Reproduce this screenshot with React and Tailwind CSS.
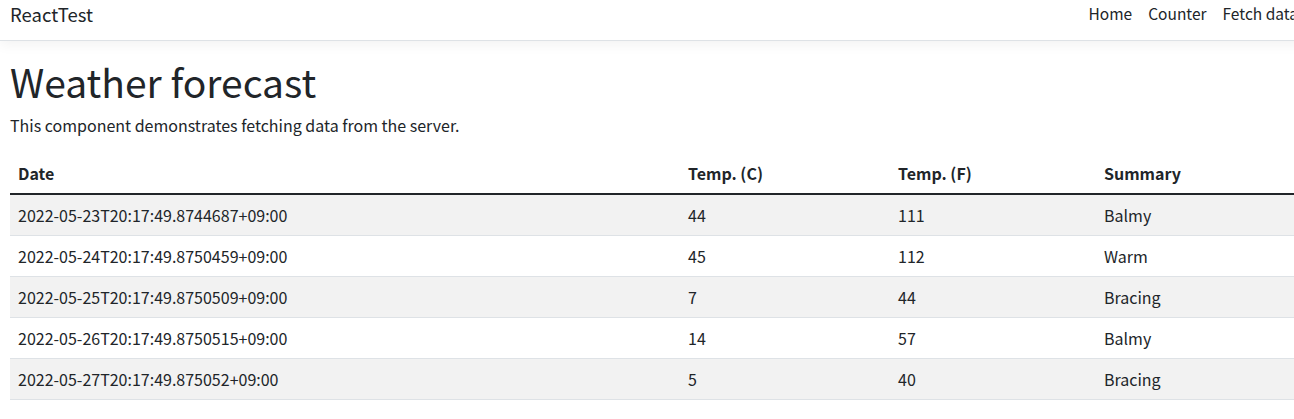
const forecasts = [
  { date: '2022-05-23T20:17:49.8744687+09:00', c: 44, f: 111, summary: 'Balmy' },
  { date: '2022-05-24T20:17:49.8750459+09:00', c: 45, f: 112, summary: 'Warm' },
  { date: '2022-05-25T20:17:49.8750509+09:00', c: 7, f: 44, summary: 'Bracing' },
  { date: '2022-05-26T20:17:49.8750515+09:00', c: 14, f: 57, summary: 'Balmy' },
  { date: '2022-05-27T20:17:49.875052+09:00', c: 5, f: 40, summary: 'Bracing' },
];

export default function App() {
  return (
    <div
      className="w-[1294px] overflow-hidden bg-white text-[#212529] text-base leading-6"
      style={{ fontFamily: '"Noto Sans CJK KR", "Noto Sans", sans-serif' }}
    >
      <div className="w-[1306px]">
        <header>
          <nav className="mb-4 flex h-[41px] items-start justify-between border-b border-[#dee2e6] bg-white pl-[10px] shadow-[0_4px_12px_rgba(0,0,0,0.05)]">
            <a className="pt-[1px] text-[18.5px] leading-[26px] text-[#212529]">ReactTest</a>
            <ul className="flex pt-[1px] text-[15.5px]">
              <li><a className="block px-2 leading-6 text-[#212529]">Home</a></li>
              <li><a className="block px-2 leading-6 text-[#212529]">Counter</a></li>
              <li><a className="block px-2 leading-6 text-[#212529]">Fetch data</a></li>
            </ul>
          </nav>
        </header>

        <main className="px-[10px]">
          <h1 className="mb-2 text-[39px] leading-[48px] font-normal">Weather forecast</h1>
          <p className="mb-4">This component demonstrates fetching data from the server.</p>

          <table className="w-full border-collapse text-left">
            <thead>
              <tr>
                <th className="w-[670px] border-b border-[#dee2e6] px-2 py-2 font-bold">Date</th>
                <th className="w-[210px] border-b border-[#dee2e6] px-2 py-2 font-bold">Temp. (C)</th>
                <th className="w-[206px] border-b border-[#dee2e6] px-2 py-2 font-bold">Temp. (F)</th>
                <th className="border-b border-[#dee2e6] px-2 py-2 font-bold">Summary</th>
              </tr>
            </thead>
            <tbody className="border-t-2 border-[#212529]">
              {forecasts.map((row, i) => (
                <tr key={row.date} className={i % 2 === 0 ? 'bg-[#f2f2f2]' : 'bg-white'}>
                  <td className="border-b border-[#dee2e6] px-2 py-2">{row.date}</td>
                  <td className="border-b border-[#dee2e6] px-2 py-2">{row.c}</td>
                  <td className="border-b border-[#dee2e6] px-2 py-2">{row.f}</td>
                  <td className="border-b border-[#dee2e6] px-2 py-2">{row.summary}</td>
                </tr>
              ))}
            </tbody>
          </table>
        </main>
      </div>
    </div>
  );
}
